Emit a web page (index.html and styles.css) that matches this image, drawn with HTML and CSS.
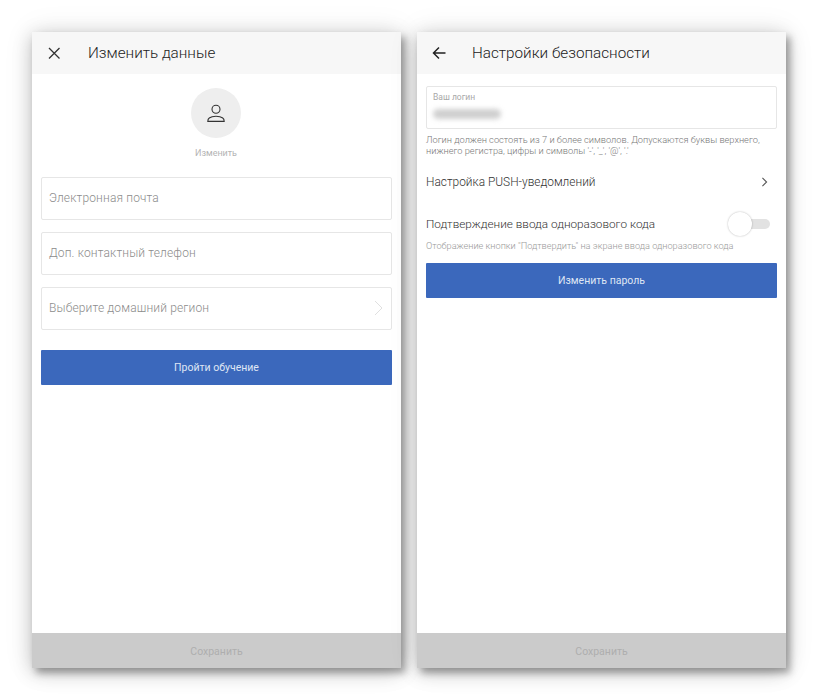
FILE: index.html
```html
<!DOCTYPE html>
<html lang="ru">
<head>
<meta charset="utf-8">
<title>Настройки</title>
<link rel="stylesheet" href="styles.css">
</head>
<body>
<main class="screens">
  <section class="phone">
    <header class="topbar">
      <svg class="nav-icon" viewBox="0 0 14 14" width="14" height="14"><path d="M2 2l10.500 10.500M12.500 2L2 12.500" fill="none" stroke="#333" stroke-width="1.300"/></svg>
      <h1 class="title title-left">Изменить данные</h1>
    </header>
    <div class="content content-left">
      <div class="avatar-block">
        <div class="avatar">
          <svg viewBox="0 0 20 20" width="20" height="20"><circle cx="10" cy="6.200" r="4" fill="none" stroke="#333" stroke-width="1.100"/><path d="M1.800 18.400c0-1.200 0-2.400 1.400-3.400 1.600-1.200 4-1.800 6.800-1.800s5.200.6 6.800 1.800c1.400 1 1.400 2.200 1.400 3.400z" fill="none" stroke="#333" stroke-width="1.100"/></svg>
        </div>
        <span class="avatar-label">Изменить</span>
      </div>
      <div class="field">Электронная почта</div>
      <div class="field">Доп. контактный телефон</div>
      <div class="field field-select">
        <span>Выберите домашний регион</span>
        <svg viewBox="0 0 9 16" width="9" height="16"><path d="M1 1l7 7-7 7" fill="none" stroke="#e0e0e0" stroke-width="1"/></svg>
      </div>
      <button class="primary">Пройти обучение</button>
    </div>
    <footer class="savebar">Сохранить</footer>
  </section>

  <section class="phone">
    <header class="topbar">
      <svg class="nav-icon" viewBox="0 0 14 14" width="14" height="14"><path d="M13.500 7H1.500M7 1.500L1.500 7 7 12.500" fill="none" stroke="#222" stroke-width="1.500"/></svg>
      <h1 class="title title-right">Настройки безопасности</h1>
    </header>
    <div class="content content-right">
      <div class="login-box">
        <span class="login-label">Ваш логин</span>
        <span class="login-value"></span>
      </div>
      <p class="hint">Логин должен состоять из 7 и более символов. Допускаются буквы верхнего, нижнего регистра, цифры и символы '-', '_', '@', '.'</p>
      <div class="push-row">
        <span>Настройка PUSH-уведомлений</span>
        <svg viewBox="0 0 7 12" width="7" height="10"><path d="M1 1l5 5-5 5" fill="none" stroke="#555" stroke-width="1.300"/></svg>
      </div>
      <div class="confirm-row">
        <span>Подтверждение ввода одноразового кода</span>
        <span class="switch"><span class="knob"></span></span>
      </div>
      <p class="confirm-hint">Отображение кнопки "Подтвердить" на экране ввода одноразового кода</p>
      <button class="primary">Изменить пароль</button>
    </div>
    <footer class="savebar">Сохранить</footer>
  </section>
</main>
</body>
</html>
```

FILE: styles.css
```css
* { box-sizing: border-box; }
html, body { margin: 0; height: 700px; background: #fff; overflow: hidden; }
body { font-family: Roboto, "Noto Sans", sans-serif; }
.screens { display: flex; gap: 16px; padding: 32px; height: 700px; }
.phone {
  width: 369px; height: 636px; display: flex; flex-direction: column; background: #fff;
  box-shadow: 4px 5px 7px rgba(0,0,0,.3), 0 4px 18px rgba(0,0,0,.22), 0 0 30px rgba(0,0,0,.08);
}
.topbar { height: 42px; background: #f7f7f7; display: flex; align-items: center; padding-left: 15px; flex: none; }
.nav-icon { flex: none; }
.title { margin: 0; font-size: 15.250px; font-weight: 300; color: #222; white-space: nowrap; margin-left: 27px; }
.title-right { margin-left: 26px; }
.content { flex: 1; padding: 0 9px; }
.content-left { padding-top: 14px; }
.content-right { padding-top: 12px; }
.avatar-block { display: flex; flex-direction: column; align-items: center; margin-bottom: 18px; padding-right: 1px; }
.avatar { width: 50px; height: 50px; border-radius: 50%; background: #eeeeee; display: flex; align-items: center; justify-content: center; }
.avatar-label { margin-top: 9px; font-size: 9px; line-height: 12px; color: #b4b4b4; }
.field {
  height: 43px; border: 1px solid #e6e6e6; border-radius: 2px; padding: 0 7px 2px; margin-bottom: 12px;
  display: flex; align-items: center; font-size: 12px; font-weight: 300; color: #8c8c8c; letter-spacing: .15px;
}
.field-select { justify-content: space-between; padding-right: 8px; margin-bottom: 20px; }
.primary {
  display: block; width: 100%; height: 35px; border: 0; border-radius: 1px; background: #3b68bc; color: #dfe6f4;
  font: 400 10.500px Roboto, sans-serif; padding: 0;
}
.login-box { height: 43px; border: 1px solid #e6e6e6; border-radius: 2px; padding: 5px 6px; display: flex; flex-direction: column; }
.login-label { font-size: 8.500px; line-height: 11px; color: #a8a8a8; }
.login-value { display: block; width: 68px; height: 10px; margin-top: 6px; background: #cfcfcf; border-radius: 5px; filter: blur(2.500px); }
.hint { margin: 5px 0 0; font-size: 9.250px; font-weight: 300; line-height: 11px; color: #777; }
.push-row { display: flex; justify-content: space-between; align-items: center; margin-top: 14px; padding-right: 9px; height: 24px; font-size: 11.900px; font-weight: 300; color: #333; }
.confirm-row { display: flex; justify-content: space-between; align-items: center; margin-top: 18px; height: 24px; font-size: 11.750px; font-weight: 300; color: #333; padding-right: 7px; }
.switch { position: relative; width: 40px; height: 10px; background: #e2e2e2; border-radius: 5px; }
.knob { position: absolute; left: -2px; top: -7px; width: 24px; height: 24px; border-radius: 50%; background: #fff; box-shadow: 0 0 2px rgba(0,0,0,.3); }
.confirm-hint { margin: 4px 0 0; font-size: 9.200px; font-weight: 300; line-height: 11px; color: #999; }
.content-right .primary { margin-top: 12px; }
.savebar { height: 35px; flex: none; background: #cbcbcb; display: flex; align-items: center; justify-content: center; padding-top: 1px; font-size: 10.500px; color: #aeaeae; }
```
